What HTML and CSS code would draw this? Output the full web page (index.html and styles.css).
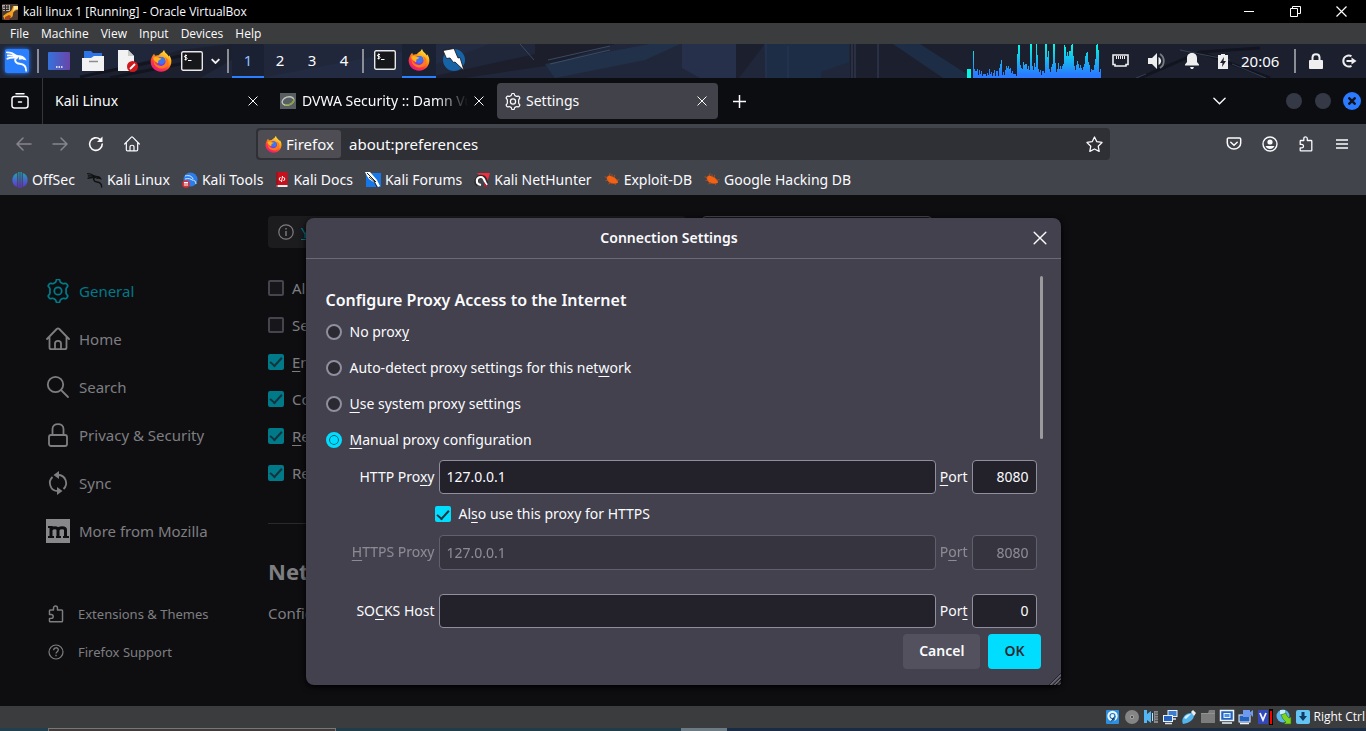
FILE: index.html
```html
<!DOCTYPE html>
<html lang="en">
<head>
<meta charset="utf-8">
<title>kali linux 1 [Running] - Oracle VirtualBox</title>
<link rel="stylesheet" href="styles.css">
</head>
<body>
<svg class="defs" aria-hidden="true">
  <defs>
    <linearGradient id="fxOuter" x1="0.8" y1="0" x2="0.2" y2="1"><stop offset="0" stop-color="#fff44f"/><stop offset=".4" stop-color="#ff980e"/><stop offset=".7" stop-color="#ff3647"/><stop offset="1" stop-color="#e31587"/></linearGradient>
    <linearGradient id="graphFill" x1="0" y1="0" x2="0" y2="34" gradientUnits="userSpaceOnUse"><stop offset="0" stop-color="#04fbe0"/><stop offset=".9" stop-color="#2a7bff"/></linearGradient>
    <linearGradient id="offsecFill" x1="0" y1="0" x2="0" y2="1"><stop offset="0" stop-color="#1aa7b5"/><stop offset="1" stop-color="#6a2bdc"/></linearGradient>
    <linearGradient id="deskFill" x1="0" y1="0" x2="1" y2="0"><stop offset="0" stop-color="#3572dc"/><stop offset="1" stop-color="#6a45a8"/></linearGradient>
    <symbol id="firefox" viewBox="0 0 24 24">
      <path fill="url(#fxOuter)" d="M2 8c.4-1.600 1.500-3 2.600-4 .1 1 .5 1.700 1.200 2.300C7 5.800 8.400 5.600 9.600 5.800 10.700 4 12 3 13.600 2.400 14 1.400 14.600.6 15.400 0c.3 1.600 1.200 2.800 2.700 4.200 1 .9 1.800 1.800 2.300 2.900.3-.3.5-.8.5-1.300C22.600 8 23.500 10.300 23.300 13c-.3 6-5.200 10.600-11.300 10.600C5.600 23.600.7 18.600.7 12.500.7 11 1.100 9.500 2 8z"/>
      <circle cx="12" cy="12.500" r="5" fill="#7542e5"/><circle cx="12.500" cy="11.500" r="3.800" fill="#3c75ef"/>
      <path fill="#ffb21e" d="M3.500 8.500c1.600-1.200 3.500-1 5-.2 1.400.7 2.500.6 3.900.9-.5 1.600-2.500 1.500-3.100 2.300-.6.9.1 2.100-.6 3.200C6.500 13 3.700 12 3.500 8.500z"/>
      <path fill="#ff7a1a" d="M4 11c.8 2.600 2.400 5.600 6.200 6.300 3.900.6 7-1.700 7.300-4.800.2-1.900-.4-3.400-1.400-4.600 3.300 1 4.700 4.100 3.900 7.200-1 3.800-4.500 5.500-8.400 5.100C7 19.700 3.600 16.200 4 11z"/>
    </symbol>
    <symbol id="terminal" viewBox="0 0 22 20"><rect x=".7" y=".7" width="20.600" height="18.600" rx="1.500" fill="#16171b" stroke="#e8e8e8" stroke-width="1.400"/><path fill="none" stroke="#fff" stroke-width="1" d="M6 4.500H4.200l-.7.600v.8l.6.600h1.200l.7.600v.8l-.6.600H3.500M4.700 3.500v6M7 9.500h3.500"/></symbol>
    <symbol id="dragon" viewBox="0 0 24 24"><path fill="none" stroke="currentColor" stroke-width="2" stroke-linecap="round" d="M1 2.500c4 0 7 1 9.500 3.500M2 6c3-.5 6 0 9 1M1.500 9.500C5 8 8.500 8 12 8.500M11 6c3 1 6 .5 8.500 3.500M12.500 8c-4.500 2-2.500 6.500 2.500 7 5 .4 7 3.500 7 7.500"/><path fill="currentColor" d="M14 6c3.500-.5 6.500 1 8.500 5.500l-4.500-1.500-4 .5z"/></symbol>
    <symbol id="gear" viewBox="1.500 1 21 22"><path fill="none" stroke="currentColor" stroke-width="1.600" stroke-linejoin="round" d="M9.400 4.300c.6-.4.800-1.300 1-2.200.2-1.100 3-1.100 3.200 0 .2.900.4 1.800 1 2.200l1.600.9c.7.400 1.500.1 2.400-.2 1.100-.4 2.900 2.200 2.100 3-.7.700-1.300 1.300-1.300 2v4c0 .7.600 1.300 1.300 2 .8.800-1 3.400-2.100 3-.9-.3-1.700-.6-2.400-.2l-1.600.9c-.6.400-.8 1.300-1 2.200-.2 1.100-3 1.100-3.200 0-.2-.9-.4-1.800-1-2.200l-1.600-.9c-.7-.4-1.500-.1-2.400.2-1.100.4-2.900-2.200-2.100-3 .7-.7 1.300-1.300 1.300-2v-4c0-.7-.6-1.300-1.300-2-.8-.8 1-3.400 2.100-3 .9.300 1.700.6 2.400.2z"/><circle cx="12" cy="12" r="3.400" fill="none" stroke="currentColor" stroke-width="1.600"/></symbol>
    <symbol id="home" viewBox="0 0 24 24"><path fill="none" stroke="currentColor" stroke-width="1.800" stroke-linecap="round" stroke-linejoin="round" d="M1 12 10.700 2c.8-.7 1.800-.7 2.600 0L23 12M3.500 10v10.500c0 1 .8 1.700 1.700 1.700h13.600c1 0 1.700-.8 1.700-1.700V10M9 22v-5.500c0-3.500 6-3.500 6 0V22"/></symbol>
    <symbol id="puzzle" viewBox="0 0 16 16"><path fill="none" stroke="currentColor" stroke-width="1.300" stroke-linejoin="round" d="M2.200 8V5.200c0-.4.200-.7.600-.7h3V2.700c0-2.500 3.500-2.500 3.500 0v1.800h3.800c.4 0 .7.300.7.700v9c0 .4-.3.700-.7.700H2.800c-.4 0-.6-.3-.6-.7v-2.300h1.500c2.400 0 2.400-3.500 0-3.500H2.200z"/></symbol>
    <symbol id="cross" viewBox="0 0 12 12"><path fill="none" stroke="currentColor" stroke-width="1.200" stroke-linecap="round" d="m1 1 10 10M11 1 1 11"/></symbol>
    <symbol id="chev" viewBox="0 0 14 8"><path fill="none" stroke="currentColor" stroke-width="1.500" stroke-linecap="round" d="m1 1 6 6 6-6"/></symbol>
    <symbol id="bug" viewBox="0 0 16 14"><path fill="#f26212" d="M2 4.500 5 2.500l5.500 2L14 8l.5 2.500-3 1-5.500-.5L3 8z"/><path stroke="#a8501f" fill="none" d="M0 4l3 1M1 8h3M4 12l3-2M8 1v3M11 2l-1 3M16 7l-3 1M12 13l-1-2M6 0 5 3"/></symbol>
  </defs>
</svg>

<header class="titlebar">
  <svg class="vbox-icon" viewBox="0 0 16 16"><rect width="16" height="16" rx="1" fill="#4a3a34"/><path fill="#b4aca6" d="M0 1h8v6H1z"/><path stroke="#2b2422" fill="none" d="M1 3h6M1 5.500h6M3.500 1v6M6 1v5"/><path fill="#f5a11c" d="M11 2h5v4c-3 .2-5 1.500-5 4 0 3-1.500 4-4 4L3 16l-2-4 4-3c3-1 5-2 6-7z"/><path fill="#ffe7a0" d="M12 2h4v3c-3 0-4 1-5 3z"/><path fill="#a3411c" d="M3 13l4-2 2 1-2 4H3z"/></svg>
  <h1 class="window-title">kali linux 1 [Running] - Oracle VirtualBox</h1>
  <div class="window-controls">
    <button aria-label="Minimize"><svg width="11" height="11" viewBox="0 0 11 11"><path stroke="#fff" d="M0 5.500h10"/></svg></button>
    <button aria-label="Restore"><svg width="11" height="11" viewBox="0 0 11 11"><path fill="none" stroke="#fff" d="M.5 2.500h7v8h-7zM2.500 2.500v-2h8v7h-3"/></svg></button>
    <button aria-label="Close"><svg width="11" height="11" viewBox="0 0 11 11"><path stroke="#fff" stroke-width="1.200" d="m.5.500 10 10M10.500.5l-10 10"/></svg></button>
  </div>
</header>

<nav class="menubar">
  <button>File</button><button>Machine</button><button>View</button><button>Input</button><button>Devices</button><button>Help</button>
</nav>

<div class="panel">
  <svg class="panel-art" viewBox="0 0 1366 34" preserveAspectRatio="none" aria-hidden="true">
    <path fill="#1b1e29" d="M90 34 180 6l50-6h30l-60 34zM735 0h30l-26 34h-4zM850 0h516v34H850z" opacity=".7"/>
    <path fill="#26304a" d="M260 34 440 0h50l-90 34z" opacity=".5"/>
    <path fill="#1c1f2b" d="M535 0h80l-70 22-80 12h-40l110-24z"/>
    <path fill="#22344d" d="M545 20 650 0l30 0-35 16-90 18z" opacity=".8"/>
    <path fill="#27304b" d="M682 0h54v34H700l-18-10z"/>
    <path fill="#1d2d45" d="M764 0h85v18l-28 10v6h-55zM893 0l50 34h30L920 0z"/>
    <path stroke="#3a3f58" d="M852 0v34M855 0v34M878 0v34" fill="none"/>
    <path stroke="#2b3954" d="M766 0v34M788 2v32" fill="none"/>
    <path stroke="#3d5470" stroke-width=".8" fill="none" d="M548 16 610 2M550 20l60-14M520 0l14 16"/>
    <path stroke="#12151f" stroke-width="3" fill="none" d="M80 33 190 10M110 34l90-18M1140 34l60-26 70 26M1200 8l60-4"/>
    <path stroke="#4a5870" fill="none" d="M1232 20l34 14M1136 34l10-4M1180 6l50 10" opacity=".6"/>
  </svg>
  <div class="panel-left">
    <button class="kali-button" aria-label="Applications"><svg width="22" height="22"><use href="#dragon"/></svg></button>
    <span class="panel-sep"></span>
    <button class="launcher" aria-label="Show desktop"><svg width="22" height="18" viewBox="0 0 22 18"><rect width="22" height="18" rx="1" fill="url(#deskFill)"/><path stroke="#fff" stroke-width="1.500" d="M8 15h1.500M10.500 15H12M13 15h1.500"/></svg></button>
    <button class="launcher" aria-label="Files"><svg width="22" height="20" viewBox="0 0 22 20"><path fill="#2f74e4" d="M2 0h7l2 2h9v6H2z"/><path fill="#f2f2f2" d="M0 7h9l3-2h10v15H0z"/><path stroke="#8d8d8d" stroke-width="1.500" d="M7 10.500h9"/></svg></button>
    <button class="launcher" aria-label="Text editor"><svg width="21" height="22" viewBox="0 0 21 22"><path fill="#f2f2f2" d="M1 0h10l6 6v15H1z"/><path fill="#c9c9c9" d="M11 0l6 6h-6z"/><circle cx="15.500" cy="16.500" r="5.500" fill="#d0191d"/><path stroke="#fff" stroke-width="1.800" d="m13 19 5-5"/></svg></button>
    <button class="launcher" aria-label="Firefox"><svg width="22" height="22"><use href="#firefox"/></svg></button>
    <button class="launcher terminal" aria-label="Terminal"><svg width="22" height="20"><use href="#terminal"/></svg></button>
    <button class="launcher-more" aria-label="More terminals"><svg width="9" height="6" viewBox="0 0 14 8" fill="none" stroke="#eee" stroke-width="3"><path d="m1 1 6 6 6-6"/></svg></button>
    <span class="panel-sep"></span>
    <div class="workspaces"><button class="active">1</button><button>2</button><button>3</button><button>4</button></div>
    <span class="panel-sep"></span>
    <button class="task" aria-label="Terminal window"><svg width="22" height="20"><use href="#terminal"/></svg></button>
    <button class="task active" aria-label="Firefox window"><svg width="22" height="22"><use href="#firefox"/></svg></button>
    <button class="task" aria-label="ZAP"><svg width="23" height="24" viewBox="0 0 23 24"><circle cx="12" cy="12" r="11" fill="#1763a8"/><path fill="#fff" stroke="#111" stroke-width=".8" d="M1 2.500 12 .5l4 9.500 2-.5 4 13-9-8.500-1.500.5L8 10l-3.500.5z"/></svg></button>
  </div>
  <div class="panel-right">
    <svg class="cpu-graph" width="134" height="34" viewBox="0 0 134 34"><path fill="#04f5e0" d="M0 25h4v9H0z"/><path fill="url(#graphFill)" d="M6 34V7h1v18h1v2h2v-2h1v6h1v-5h1v4h1v-3h1v5h1v-2h3v2h1v-3h1v2h1v-6h1v5h1v-2h1v4h1v-3h1v-3h1v6h1v-5h2v5h1v-8h1v-4h1v-4h1v15h1v-3h1v3h1v-5h1v-4h1v2h1v-2h1v3h1v-1h1v5h1v-2h1v3h3v2h1V10h1V1h2v20h1v3h1v1h1v-7h1v3h1v-1h2v5h1v-3h1v4h1V0h2v22h1v4h1v-7h1v4h1V0h1v11h1v14h1v3h1v-2h1v5h1v-4h2v2h1V0h2v13h1V7h1v18h1v3h1v-5h1v-3h1V0h2v19h1v9h1v-3h1v-6h1v6h1v-3h1v3h1v-3h1v-2h1V1h1v2h1v9h1V8h1v4h1V7h2V1h1V0h1v12h1v10h1v4h1v-5h1v-4h1v3h1v4h1v-3h1v3h1v2h1v-3h1v-3h1v-8h1v-3h1v-1h1v10h1v3h1v7h1v-3h1v1h2v-5h1v-6h1V1h1V0h1v6h1v22h1v-3h2v9z"/></svg>
    <svg class="tray-icon" width="18" height="16" viewBox="0 0 18 16"><path fill="none" stroke="#eee" stroke-width="1.600" d="M1 2h15v9.500h-2V13H3v-1.500H1z"/><path stroke="#eee" d="M4.500 3v3M6.500 3v3M8.500 3v3M10.500 3v3M12.500 3v3"/></svg>
    <svg class="tray-icon" width="18" height="16" viewBox="0 0 18 16"><path fill="#eee" d="M0 5h4l5-5v16l-5-5H0z"/><path fill="#eee" d="M10.500 4c3.500 2 3.500 6 0 8z"/><path fill="none" stroke="#777b83" stroke-width="1.800" d="M12 1c5 3 5 11 0 14"/></svg>
    <svg class="tray-icon" width="16" height="16" viewBox="0 0 16 16"><path fill="#eee" d="M8 0c3.500 0 5 2.500 5 5v4l2 2.500v1H1v-1L3 9V5c0-2.500 1.500-5 5-5zM6 14h4l-1 2H7z"/></svg>
    <svg class="tray-icon" width="10" height="15" viewBox="0 0 10 15"><path fill="#eee" d="M3 0h4v1h3v14H0V1h3z"/><path fill="#1e202b" d="M6 3 2 9h2.500L4 13l4-6H5.500z"/></svg>
    <time class="clock">20:06</time>
    <span class="panel-sep"></span>
    <svg class="tray-icon" width="14" height="16" viewBox="0 0 14 16"><path fill="none" stroke="#eee" stroke-width="2" d="M3.500 8V4.500c0-4.500 7-4.500 7 0V8"/><rect y="7" width="14" height="9" rx="1" fill="#eee"/></svg>
    <svg class="tray-icon" width="16" height="14" viewBox="0 0 16 14"><path fill="none" stroke="#eee" stroke-width="2" d="M10.500 2.200A5.500 5.500 0 1 0 10.500 11.800M5.500 7H12"/><path fill="#eee" d="m10.500 3.500 5 3.500-5 3.500z"/></svg>
  </div>
</div>

<div class="tabstrip">
  <button class="recent-tabs" aria-label="Recent browsing"><svg width="18" height="16" viewBox="0 0 18 16"><path fill="none" stroke="#fbfbfe" stroke-width="1.500" stroke-linecap="round" d="M5 .8h8M3.500 3.500h11c1.500 0 2.500.8 2.500 2.200v7.100c0 1.400-1 2.200-2.500 2.200h-11C2 15 1 14.200 1 12.800V5.700c0-1.400 1-2.200 2.500-2.200zM7.500 9h3"/></svg></button>
  <div class="tab"><span class="tab-label">Kali Linux</span><button aria-label="Close tab"><svg width="10" height="10"><use href="#cross"/></svg></button></div>
  <div class="tab dvwa"><svg width="16" height="16" viewBox="0 0 16 16"><rect width="16" height="16" fill="#595e62"/><ellipse cx="8" cy="8" rx="6" ry="4" fill="none" stroke="#bfc8c0" stroke-width="1.400" transform="rotate(-18 8 8)"/><path fill="none" stroke="#8aa23a" stroke-width="1.400" d="M5 12c5 0 9-2 9-6"/></svg><span class="tab-label faded">DVWA Security :: Damn Vulnerable</span><button aria-label="Close tab"><svg width="10" height="10"><use href="#cross"/></svg></button></div>
  <div class="tab selected"><svg width="16" height="17"><use href="#gear"/></svg><span class="tab-label">Settings</span><button aria-label="Close tab"><svg width="10" height="10"><use href="#cross"/></svg></button></div>
  <button class="new-tab" aria-label="New tab"><svg width="13" height="13" viewBox="0 0 13 13"><path stroke="#fbfbfe" stroke-width="1.500" d="M6.500 0v13M0 6.500h13"/></svg></button>
  <button class="all-tabs" aria-label="List all tabs"><svg width="13" height="8"><use href="#chev"/></svg></button>
  <div class="guest-controls"><button aria-label="Minimize window"></button><button aria-label="Maximize window"></button><button class="close" aria-label="Close window"><svg width="8" height="8" viewBox="0 0 8 8"><path stroke="#10131c" stroke-width="2.400" d="m.5.500 7 7M7.500.5l-7 7"/></svg></button></div>
</div>

<div class="toolbar">
  <div class="nav-buttons">
    <button class="dim" aria-label="Back"><svg width="16" height="14" viewBox="0 0 16 14"><path fill="none" stroke="currentColor" stroke-width="1.500" stroke-linecap="round" d="M15 7H1.500M7 1 1 7l6 6"/></svg></button>
    <button class="dim" aria-label="Forward"><svg width="16" height="14" viewBox="0 0 16 14"><path fill="none" stroke="currentColor" stroke-width="1.500" stroke-linecap="round" d="M1 7h13.500M9 1l6 6-6 6"/></svg></button>
    <button aria-label="Reload"><svg width="16" height="16" viewBox="0 0 16 16"><path fill="none" stroke="currentColor" stroke-width="1.600" stroke-linecap="round" d="M14.200 8A6.300 6.300 0 1 1 12 3.300"/><path fill="currentColor" d="M14.500.5v5.500H9z"/></svg></button>
    <button aria-label="Home"><svg width="16" height="16"><use href="#home"/></svg></button>
  </div>
  <div class="urlbar">
    <button class="identity"><svg width="17" height="17"><use href="#firefox"/></svg>Firefox</button>
    <input class="url" type="text" value="about:preferences" aria-label="Address">
    <button class="star" aria-label="Bookmark this page"><svg width="17" height="17" viewBox="0 0 16 16"><path fill="none" stroke="currentColor" stroke-width="1.200" stroke-linejoin="round" d="m8 .9 2.200 4.500 4.900.7-3.600 3.500.9 4.900L8 12.200l-4.400 2.300.9-4.900L.9 6.100l4.900-.7z"/></svg></button>
  </div>
  <div class="nav-right">
    <button aria-label="Pocket"><svg width="16" height="16" viewBox="0 0 16 16"><path fill="none" stroke="currentColor" stroke-width="1.500" stroke-linecap="round" d="M2.500 2h11c.7 0 1.200.5 1.200 1.200V7a6.700 6 0 0 1-13.400 0V3.200C1.300 2.500 1.800 2 2.500 2zM4.800 6.300 8 9.200l3.200-2.900"/></svg></button>
    <button aria-label="Account"><svg width="16" height="16" viewBox="0 0 16 16"><circle cx="8" cy="8" r="7" fill="none" stroke="currentColor" stroke-width="1.400"/><circle cx="8" cy="6" r="2.600" fill="currentColor"/><path fill="currentColor" d="M3.500 10h9c-1 2-2.500 3-4.500 3s-3.500-1-4.500-3z"/></svg></button>
    <button aria-label="Extensions"><svg width="16" height="16"><use href="#puzzle"/></svg></button>
    <button aria-label="Menu"><svg width="12" height="10" viewBox="0 0 12 10"><path stroke="currentColor" stroke-width="1.300" d="M0 1h12M0 5h12M0 9h12"/></svg></button>
  </div>
</div>

<nav class="bookmarks">
  <a href="#offsec"><svg width="16" height="16" viewBox="0 0 16 16"><path fill="url(#offsecFill)" d="M5.200 1v14C-1.300 13-1.300 3 5.200 1zM10.800 1v14c6.500-2 6.500-12 0-14zM6.300 0h1.200v16H6.300zM8.500 0h1.200v16H8.500z"/></svg>OffSec</a>
  <a href="#kali" class="dark"><svg width="16" height="16"><use href="#dragon"/></svg><span>Kali Linux</span></a>
  <a href="#tools"><svg width="16" height="16" viewBox="0 0 16 16"><circle cx="8.500" cy="7.500" r="7" fill="#2b7de9"/><path fill="none" stroke="#dce9ff" d="M3 4c4-1 7 0 8 3M3 7c4-1 6 0 7 1 2 0 4 1 4 4"/><circle cx="4" cy="12" r="3.800" fill="#d9303a"/><path fill="none" stroke="#fff" d="M2 10.500h4M3 10.500V14M5 10.500V14"/></svg>Kali Tools</a>
  <a href="#docs"><svg width="14" height="16" viewBox="0 0 13 16"><path fill="#c8101c" d="M1 0h11v13H1z"/><path fill="#eee" d="M1 13h11v2H1z"/><path fill="#8c0f16" d="M1 0h1v15H1z"/><path fill="none" stroke="#fff" d="M5 5 3.500 7 5 9M8 5l1.500 2L8 9M7 4 6 10"/></svg>Kali Docs</a>
  <a href="#forums"><svg width="16" height="16" viewBox="0 0 16 16"><path fill="#1678e8" d="M1 1h15v14H1z"/><path fill="#fff" d="M0 0h5l7 8 3 6-2 1-3-4-6-4-2-3z"/><path stroke="#222" d="m2 1 9 9M4 5l6 5M9 9l3 6"/></svg>Kali Forums</a>
  <a href="#nethunter"><svg width="16" height="15" viewBox="0 0 16 15"><path fill="#f42c3c" d="M3 1h13l-3 10z"/><path fill="none" stroke="#2b2b2b" stroke-width="4" d="M4 13c-4-3 0-9 4-8 4 0 3 5 5 7"/><path fill="none" stroke="#fff" stroke-width="2.200" d="M7 13c-6-1-5-8 0-8 4 0 3 5 6 8"/><path fill="#a91d36" d="m10 10 4 5h-4z"/></svg>Kali NetHunter</a>
  <a href="#exploit"><svg width="16" height="13"><use href="#bug"/></svg>Exploit-DB</a>
  <a href="#ghdb"><svg width="16" height="13"><use href="#bug"/></svg>Google Hacking DB</a>
</nav>

<main class="page">
  <aside class="sidebar">
    <nav class="categories">
      <a href="#general" class="current"><svg width="24" height="24"><use href="#gear"/></svg>General</a>
      <a href="#home"><svg width="24" height="24"><use href="#home"/></svg>Home</a>
      <a href="#search"><svg width="24" height="24" viewBox="0 0 24 24"><circle cx="9.500" cy="9.500" r="7.700" fill="none" stroke="currentColor" stroke-width="1.800"/><path stroke="currentColor" stroke-width="1.800" stroke-linecap="round" d="m15 15 7 7"/></svg>Search</a>
      <a href="#privacy"><svg width="24" height="24" viewBox="0 0 24 24"><rect x="3" y="12" width="18" height="11" rx="2" fill="none" stroke="currentColor" stroke-width="1.800"/><path fill="none" stroke="currentColor" stroke-width="1.800" d="M6.500 12V6c0-6.600 11-6.600 11 0v6"/></svg>Privacy &amp; Security</a>
      <a href="#sync"><svg width="24" height="24" viewBox="0 0 24 24"><path fill="none" stroke="currentColor" stroke-width="1.800" d="M12 4c8 0 10.500 9.500 5.500 14M12 20C4 20 1.500 10.500 6.500 6"/><path fill="currentColor" d="M13 0v8L7.500 4zM11 24v-8l5.500 4z"/></svg>Sync</a>
      <a href="#more"><svg width="24" height="24" viewBox="0 0 24 24"><path fill="#88888b" d="M0 0h24v24H0z"/><path fill="none" stroke="#0e0e11" stroke-width="3" d="M5 7v11M12 18v-7c0-3-6-3-7 0M19.500 18v-7c0-3-6.500-3-7.500 0"/><path stroke="#0e0e11" stroke-width="2" d="M2 8h4M2 18h6M10 18h5M17 18h6"/></svg>More from Mozilla</a>
    </nav>
    <nav class="support">
      <a href="#addons"><svg width="18" height="18"><use href="#puzzle"/></svg>Extensions &amp; Themes</a>
      <a href="#support"><svg width="18" height="18" viewBox="0 0 18 18"><circle cx="9" cy="9" r="7" fill="none" stroke="currentColor" stroke-width="1.200"/><path fill="none" stroke="currentColor" stroke-width="1.300" d="M6.700 7.200C6.700 4 11.300 4 11.300 7c0 1.700-2.300 1.700-2.300 3.600M9 11.800v1.500"/></svg>Firefox Support</a>
    </nav>
  </aside>
  <section class="content">
    <div class="page-top">
      <div class="notice"><svg width="16" height="16" viewBox="0 0 16 16"><circle cx="8" cy="8" r="7.200" fill="none" stroke="currentColor" stroke-width="1.200"/><path stroke="currentColor" stroke-width="1.400" d="M8 7v5M8 4v1.500"/></svg><a href="#policies">Y</a></div>
      <input class="find" type="text" aria-label="Find in Settings">
    </div>
    <div class="options">
      <label><input type="checkbox"><span>Al</span></label>
      <label><input type="checkbox"><span>Se</span></label>
      <label><input type="checkbox" checked><span><u>E</u>n</span></label>
      <label><input type="checkbox" checked><span>Co</span></label>
      <label><input type="checkbox" checked><span><u>R</u>e</span></label>
      <label><input type="checkbox" checked><span>Re</span></label>
    </div>
    <h2>Net</h2>
    <p>Config</p>
  </section>

  <div class="backdrop">
    <form class="dialog" role="dialog" aria-labelledby="dialog-title">
      <header class="dialog-header">
        <h2 id="dialog-title">Connection Settings</h2>
        <button type="button" aria-label="Close"><svg width="14" height="14"><use href="#cross"/></svg></button>
      </header>
      <div class="dialog-body">
        <div class="scroll-thumb"></div>
        <h3>Configure Proxy Access to the Internet</h3>
        <div class="choices">
          <label><input type="radio" name="proxy"><span>No prox<u>y</u></span></label>
          <label><input type="radio" name="proxy"><span>Auto-detect proxy settings for this net<u>w</u>ork</span></label>
          <label><input type="radio" name="proxy"><span><u>U</u>se system proxy settings</span></label>
          <label><input type="radio" name="proxy" checked><span><u>M</u>anual proxy configuration</span></label>
        </div>
        <div class="field">
          <label for="http">HTTP Pro<u>x</u>y</label><input id="http" type="text" value="127.0.0.1">
          <label for="http-port"><u>P</u>ort</label><input id="http-port" class="port" type="text" value="8080">
        </div>
        <label class="share"><input type="checkbox" checked><span>Al<u>s</u>o use this proxy for HTTPS</span></label>
        <div class="field off">
          <label for="https"><u>H</u>TTPS Proxy</label><input id="https" type="text" value="127.0.0.1" disabled>
          <label for="https-port">P<u>o</u>rt</label><input id="https-port" class="port" type="text" value="8080" disabled>
        </div>
        <div class="field socks">
          <label for="socks">SO<u>C</u>KS Host</label><input id="socks" type="text">
          <label for="socks-port">Por<u>t</u></label><input id="socks-port" class="port" type="text" value="0">
        </div>
      </div>
      <footer class="dialog-footer"><button type="button">Cancel</button><button type="button" class="primary">OK</button></footer>
      <svg class="grip" width="12" height="12" viewBox="0 0 12 12"><path stroke="#24232c" d="M0 12 12 0M4 12l8-8M8 12l4-4"/><path stroke="#85848e" d="m1 12.500 11-11M5 12.500l7-7M9 12.500l3-3"/></svg>
    </form>
  </div>
</main>

<footer class="vm-status">
  <svg viewBox="0 0 16 16"><rect x="1" y="1" width="13" height="14" rx="1" fill="#2c8fe0"/><circle cx="7.500" cy="7" r="5.200" fill="#eaf6ff"/><circle cx="7.500" cy="7" r="2.500" fill="none" stroke="#2576bd" stroke-width="1.200"/><path stroke="#2576bd" stroke-width="1.500" d="m10 7-1 4-4 2"/></svg>
  <svg viewBox="0 0 16 16"><circle cx="8" cy="8" r="7" fill="#858585"/><circle cx="8" cy="8" r="2" fill="#a9a9a9"/><circle cx="8" cy="8" r="1" fill="#333"/></svg>
  <svg viewBox="0 0 16 16"><path fill="#53b5f2" d="M1 1h3v4l4-3v12l-4-3v3H1z"/><path fill="#888" d="M11 2h4v12h-4z"/><path stroke="#b9e4ff" d="M9.500 4v8"/><path stroke="#555" d="M12 4h3M12 6.500h3M12 9h3M12 11.500h3"/></svg>
  <svg viewBox="0 0 16 16"><rect x="6" y="1.500" width="9" height="6" fill="#3c7cd4" stroke="#e8f2fc"/><rect x="1.500" y="6.500" width="9" height="6" fill="#2563bd" stroke="#e8f2fc"/><path stroke="#dde" stroke-width="1.500" d="M3 14.500h7M11 10h3"/></svg>
  <svg viewBox="0 0 16 16"><path fill="#54b4ef" d="M2 9c2-4 5-5 9-5l2 2c0 5-5 8-11 9-1-2-1-4 0-6z"/><path fill="#d7efff" d="M3 9c2-3 4-4 7-4L5 10z"/><path fill="#eee" d="m10 3 2-2 3 3-2 3z"/></svg>
  <svg viewBox="0 0 16 16"><path fill="#7c7c7c" d="M1 4h7l1-3h6v13H1z"/><path stroke="#929292" d="M1 4.500h14"/></svg>
  <svg viewBox="0 0 16 16"><rect x="1.500" y="1.500" width="13" height="10" fill="#2563bd" stroke="#eaf4ff" stroke-width="1.500"/><rect x="5" y="4.500" width="6" height="4" fill="#4b94e4" stroke="#eaf4ff"/><path stroke="#eaf4ff" stroke-width="1.500" d="M3 14h10"/></svg>
  <svg viewBox="0 0 16 16"><rect x="1" y="6" width="11" height="7" fill="#2563bd" stroke="#eaf4ff"/><path fill="#6e9bf1" d="M5 1h7v7H5zM11 4l4-3v7z"/><path stroke="#eaf4ff" stroke-width="1.500" d="M2 14.500h9"/></svg>
  <svg viewBox="0 0 16 16"><path fill="#3447b8" d="M1 1h10v14H1z"/><path fill="none" stroke="#f2f5ff" stroke-width="1.800" d="m3 4 3 7 3-7"/><path fill="#000" d="M12 0h4v16h-4z"/><path fill="#f00" d="M13 2h2v13h-2z"/></svg>
  <svg viewBox="0 0 16 16"><circle cx="7" cy="7" r="6.500" fill="#57b4ee"/><path fill="#c7ecff" d="M4 1h5v4H4z"/><path fill="#7fd321" stroke="#2c730d" stroke-width=".6" d="m5 6 5-2 1 3 2 2 2-1v7H8l2-2-3-3z"/></svg>
  <svg viewBox="0 0 16 16"><rect x="1" y="1" width="14" height="14" rx="2" fill="#66c4f5"/><path fill="#103b66" d="M6.500 3h3v4H12l-4 5-4-5h2.500z"/></svg>
  <span>Right Ctrl</span>
</footer>
<div class="host-edge"><span class="edge-a"></span><span class="edge-b"></span><span class="edge-c"></span><span class="edge-d"></span></div>
</body>
</html>
```
FILE: styles.css
```css
* { box-sizing: border-box; }
body {
  margin: 0;
  min-height: 100vh;
  display: flex;
  flex-direction: column;
  background: #0e0e11;
  color: #fbfbfe;
  font: 14px/20px "Noto Sans", "Open Sans", sans-serif;
}
button, input { font: inherit; color: inherit; }
button { border: 0; background: none; padding: 0; display: flex; align-items: center; justify-content: center; }
a { color: inherit; text-decoration: none; }
h1, h2, h3, p { margin: 0; }
svg { flex: none; display: block; }
u { text-underline-offset: 3px; text-decoration-thickness: 1px; }
.defs { position: absolute; width: 0; height: 0; }

/* host window */
.titlebar { height: 23px; display: flex; align-items: center; gap: 5px; padding: 0 2px; background: #000; }
.vbox-icon { width: 16px; height: 16px; }
.window-title { flex: 1; font: 12px/20px "Open Sans", "Noto Sans", sans-serif; }
.window-controls { display: flex; }
.window-controls button { width: 46px; height: 22px; }
.menubar { height: 21px; display: flex; gap: 12px; padding: 0 10px; background: #3b3c3d; font: 12px/21px "Open Sans", "Noto Sans", sans-serif; }

/* guest panel */
.panel { position: relative; height: 34px; display: flex; justify-content: space-between; background: #20273a; }
.panel-art { position: absolute; inset: 0; width: 100%; height: 100%; }
.panel-left, .panel-right { position: relative; display: flex; align-items: center; font-size: 15px; }
.kali-button { width: 24px; height: 24px; margin: 0 8px 0 5px; border-radius: 2px; background: #2a7fff; box-shadow: 0 0 4px #2a7fff; }
.panel-sep { width: 2px; height: 24px; background: #8a8d96; }
.launcher { width: 34px; height: 34px; }
.panel-left .panel-sep + .launcher { margin-left: 3px; }
.launcher.terminal { width: 28px; }
.launcher-more { width: 18px; height: 34px; margin-right: 3px; }
.workspaces { display: flex; margin: 0 2px 0 3px; }
.workspaces button { width: 32px; height: 34px; border-bottom: 2px solid transparent; }
.workspaces button.active, .task.active { background: #1a2133; border-bottom: 2px solid #2a7fff; }
.workspaces button.active { color: #8fc0ff; }
.workspaces + .panel-sep { margin-right: 4px; }
.task { width: 34px; height: 34px; border-bottom: 2px solid transparent; }
.panel-right { gap: 18px; padding-right: 9px; }
.cpu-graph { margin-right: -7px; }
.clock { width: 40px; margin-left: -5px; }
.panel-right .panel-sep { margin: 0 -5px; }

/* tabs */
.tabstrip { height: 46px; display: flex; align-items: center; background: #0c0d10; }
.recent-tabs { width: 43px; height: 46px; padding-right: 3px; border-right: 1px solid #34353a; }
.tab { flex: 0 1 226px; min-width: 0; height: 36px; display: flex; align-items: center; gap: 5px; padding: 0 11px 0 12px; }
.tab.dvwa { padding-left: 11px; gap: 6px; }
.tab.selected { flex-basis: 221px; margin-left: 2px; padding-left: 8px; background: #42434a; border-radius: 4px; }
.tab-label { flex: 1; min-width: 0; overflow: hidden; white-space: nowrap; }
.tab-label.faded { -webkit-mask-image: linear-gradient(to left, transparent, #000 32px); mask-image: linear-gradient(to left, transparent, #000 32px); }
.new-tab { width: 43px; height: 36px; }
.all-tabs { width: 36px; height: 36px; margin-left: auto; }
.guest-controls { display: flex; align-items: center; gap: 13px; padding: 0 5px 0 49px; }
.guest-controls button { width: 16px; height: 16px; border-radius: 50%; background: #353946; }
.guest-controls .close { width: 18px; height: 18px; background: #2a7bff; margin-left: -1px; }

/* navigation */
.toolbar { height: 40px; display: flex; align-items: center; background: #42444c; font-size: 15px; }
.nav-buttons, .nav-right { display: flex; padding: 0 6px; }
.nav-buttons { width: 256px; }
.nav-right { width: 256px; justify-content: flex-end; }
.nav-buttons button, .nav-right button { width: 36px; height: 32px; }
.nav-buttons .dim { color: #85868c; }
.urlbar { flex: 1; height: 32px; display: flex; align-items: center; gap: 8px; padding: 2px; background: #2f3035; border-radius: 4px; }
.identity { width: 83px; height: 28px; gap: 4px; background: #4d4d53; border-radius: 3px; }
.url { flex: 1; min-width: 0; border: 0; padding: 0; background: none; outline: 0; }
.star { width: 28px; height: 28px; }
.bookmarks { height: 31px; display: flex; align-items: center; gap: 12px; padding: 0 12px; background: #42444c; white-space: nowrap; }
.bookmarks a { display: flex; align-items: center; gap: 4px; }
.bookmarks .dark svg { color: #101113; }

/* settings page */
.page { position: relative; flex: 1; display: flex; color: #7e7e81; }
.sidebar { width: 268px; padding: 72px 0 0 46px; }
.categories a { height: 48px; display: flex; align-items: center; gap: 9px; font-size: 15px; }
.categories .current { color: #007988; }
.support { padding-top: 40px; font-size: 13px; }
.support a { height: 38px; display: flex; align-items: center; gap: 13px; padding-left: 1px; }
.content { width: 664px; padding-top: 21px; font-size: 15px; }
.page-top { display: flex; gap: 16px; }
.notice { flex: 1; height: 32px; display: flex; align-items: center; gap: 7px; padding-left: 10px; border-radius: 4px; background: #1c1c1e; }
.notice a { color: #007988; text-decoration: underline; }
.find { width: 230px; height: 32px; border: 1px solid #46454e; border-radius: 4px; background: #17161b; }
.options { padding: 21px 0 32px; border-bottom: 1px solid #29292c; }
.options label { height: 37px; display: flex; align-items: center; gap: 8px; }
.content h2 { padding-top: 31px; font-size: 22px; line-height: 32px; }
.content p { padding-top: 16px; }
.content input[type="checkbox"] { border-color: #46454e; background-color: #17161b; }
.content input[type="checkbox"]:checked { border-color: #007988; background-color: #007988; }

input[type="checkbox"], input[type="radio"] { appearance: none; flex: none; width: 16px; height: 16px; margin: 0; border: 2px solid #8f8f9d; background: #2b2a33; }
input[type="checkbox"] { border-radius: 2px; display: grid; place-items: center; }
input[type="checkbox"]:checked { border-color: #00ddff; background: #00ddff; }
input[type="checkbox"]:checked::before { content: ""; width: 10px; height: 5px; border: solid #15333c; border-width: 0 0 2px 2px; transform: translateY(-1px) rotate(-48deg); }
input[type="radio"] { border-radius: 50%; }
input[type="radio"]:checked { border: 3px solid #00ddff; background: #00ddff; box-shadow: inset 0 0 0 1px #12505f; }

/* connection dialog */
.backdrop { position: absolute; inset: 0; padding-top: 1px; display: grid; place-items: center; color: #fbfbfe; }
.dialog { position: relative; width: 755px; max-width: 96%; background: #42414d; border-radius: 8px; box-shadow: 0 2px 6px #000; }
.dialog-header { height: 41px; display: grid; grid-template-columns: 1fr 42px; align-items: center; padding-left: 14px; border-bottom: 1px solid #6a6974; }
.dialog-header h2 { text-align: center; font-size: 14px; font-weight: 600; line-height: 20px; }
.dialog-header button { height: 40px; }
.dialog-body { position: relative; padding: 31px 24px 6px 20px; }
.dialog-body h3 { padding-bottom: 4px; font-size: 16px; font-weight: 600; line-height: 20px; }
.scroll-thumb { position: absolute; top: 17px; right: 18px; width: 3px; height: 163px; border-radius: 2px; background: #9b9b9d; }
.choices { padding-bottom: 2px; }
.choices label { height: 36px; display: flex; align-items: center; gap: 8px; }
.field { display: grid; grid-template-columns: 109px 1fr 28px 65px; align-items: center; gap: 4px; white-space: nowrap; }
.field label { text-align: right; }
.field input { width: 100%; height: 34px; padding: 0 7px; border: 1px solid #8f8f9d; border-radius: 4px; background: #23222b; }
.field .port { text-align: right; }
.share { height: 41px; display: flex; align-items: center; gap: 8px; padding-left: 109px; }
.off { opacity: .4; }
.field.off input { height: 35px; }
.socks { margin-top: 24px; }
.dialog-footer { display: flex; justify-content: flex-end; gap: 8px; padding: 0 20px 16px; font-weight: 600; }
.dialog-footer button { height: 35px; padding: 0 16px; border-radius: 4px; background: #52515d; }
.dialog-footer .primary { background: #00ddff; color: #2b2a33; }
.grip { position: absolute; right: 0; bottom: 0; }

/* host status bar */
.vm-status { height: 22px; display: flex; align-items: center; justify-content: flex-end; gap: 3px; padding-right: 1px; background: #3b3c3d; font: 12px/20px "Open Sans", "Noto Sans", sans-serif; }
.vm-status svg { width: 16px; height: 16px; }
.host-edge { height: 3px; display: flex; background: #1a2c44; }
.edge-a { width: 48px; background: #223f4e; }
.edge-b { width: 288px; background: #403a3a; border: solid #777; border-width: 1px 1px 0; }
.edge-c { width: 345px; background: #203c49; }
.edge-d { width: 46px; background: #6b7a83; }
```
